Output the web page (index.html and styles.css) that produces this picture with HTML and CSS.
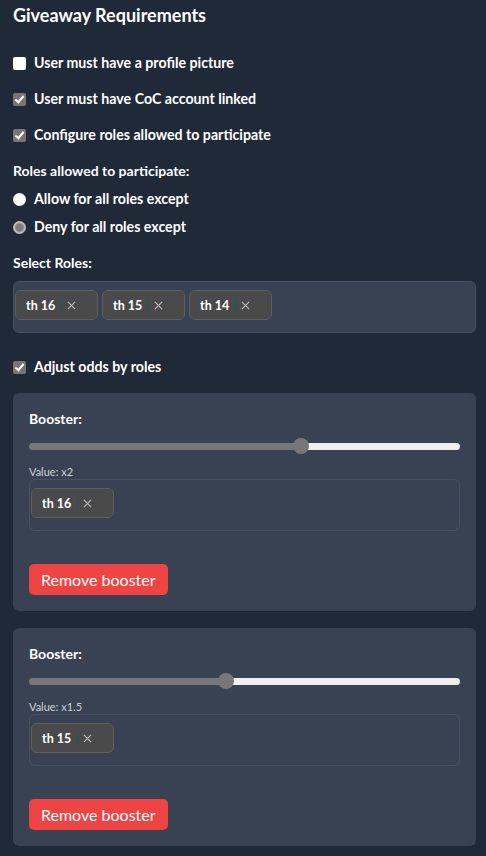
FILE: index.html
```html
<!DOCTYPE html>
<html>
<head>
<meta charset="utf-8">
<link rel="stylesheet" href="styles.css">
</head>
<body>
<div class="page">
  <h2 class="title">Giveaway Requirements</h2>
  <div class="checks">
    <label class="row"><input type="checkbox" class="cb"> <span>User must have a profile picture</span></label>
    <label class="row"><input type="checkbox" class="cb" checked> <span>User must have CoC account linked</span></label>
    <label class="row"><input type="checkbox" class="cb" checked> <span>Configure roles allowed to participate</span></label>
  </div>
  <div class="label roles-label">Roles allowed to participate:</div>
  <div class="radios">
    <label class="row"><input type="radio" name="mode" class="rb"> <span>Allow for all roles except</span></label>
    <label class="row"><input type="radio" name="mode" class="rb" checked> <span>Deny for all roles except</span></label>
  </div>
  <div class="label select-label">Select Roles:</div>
  <div class="select">
    <span class="chip"><span class="chip-text">th 16</span><span class="chip-sep"></span><svg class="chip-x" viewBox="0 0 10 10"><path d="M1 1L9 9M9 1L1 9"/></svg></span>
    <span class="chip"><span class="chip-text">th 15</span><span class="chip-sep"></span><svg class="chip-x" viewBox="0 0 10 10"><path d="M1 1L9 9M9 1L1 9"/></svg></span>
    <span class="chip"><span class="chip-text">th 14</span><span class="chip-sep"></span><svg class="chip-x" viewBox="0 0 10 10"><path d="M1 1L9 9M9 1L1 9"/></svg></span>
  </div>
  <label class="row adjust"><input type="checkbox" class="cb" checked> <span>Adjust odds by roles</span></label>

  <div class="card">
    <div class="label">Booster:</div>
    <input type="range" class="slider" min="0.25" max="3" step="0.25" value="2" style="--p:63.6%">
    <div class="value">Value: x2</div>
    <div class="select inner">
      <span class="chip"><span class="chip-text">th 16</span><span class="chip-sep"></span><svg class="chip-x" viewBox="0 0 10 10"><path d="M1 1L9 9M9 1L1 9"/></svg></span>
    </div>
    <button class="remove">Remove booster</button>
  </div>

  <div class="card">
    <div class="label">Booster:</div>
    <input type="range" class="slider" min="0.25" max="3" step="0.25" value="1.5" style="--p:45.5%">
    <div class="value">Value: x1.5</div>
    <div class="select inner">
      <span class="chip"><span class="chip-text">th 15</span><span class="chip-sep"></span><svg class="chip-x" viewBox="0 0 10 10"><path d="M1 1L9 9M9 1L1 9"/></svg></span>
    </div>
    <button class="remove">Remove booster</button>
  </div>
</div>
</body>
</html>
```
FILE: styles.css
```css
html, body {
  margin: 0;
  padding: 0;
  background: #1f2937;
}
body {
  font-family: "Lato", "Noto Sans", sans-serif;
  color: #ffffff;
  height: 856px;
  overflow: hidden;
}
.page {
  padding: 3px 10px 0 13px;
  display: flex;
  flex-direction: column;
}
.title {
  margin: 0;
  font-size: 18px;
  line-height: 24px;
  font-weight: 700;
}
.checks {
  margin-top: 26px;
  display: flex;
  flex-direction: column;
  gap: 16px;
}
.row {
  display: flex;
  align-items: center;
  gap: 8px;
  font-size: 14.2px;
  font-weight: 700;
  line-height: 20px;
  height: 20px;
}
.cb {
  appearance: none;
  -webkit-appearance: none;
  margin: 0;
  width: 13px;
  height: 13px;
  border-radius: 2px;
  background: #ffffff;
  position: relative;
  flex: none;
}
.cb:checked {
  background: #767676;
}
.cb:checked::after {
  content: "";
  position: absolute;
  left: 4px;
  top: 1.5px;
  width: 3px;
  height: 7px;
  border: solid #fff;
  border-width: 0 2px 2px 0;
  transform: rotate(40deg);
}
.label {
  font-size: 14px;
  font-weight: 700;
  line-height: 20px;
}
.roles-label {
  margin-top: 16px;
}
.radios {
  margin-top: 8px;
  display: flex;
  flex-direction: column;
  gap: 8px;
}
.rb {
  appearance: none;
  -webkit-appearance: none;
  margin: 0;
  width: 13px;
  height: 13px;
  border-radius: 50%;
  background: #ffffff;
  flex: none;
  box-sizing: border-box;
}
.rb:checked {
  background: #7b7b7b;
  border: 2px solid #b9b9b9;
  box-shadow: inset 0 0 0 1px #8e8e8e;
}
.select-label {
  margin-top: 16px;
}
.select {
  margin-top: 8px;
  box-sizing: border-box;
  width: 463px;
  height: 52px;
  border: 1px solid #475163;
  border-radius: 6px;
  background: #394252;
  padding: 8px 0 0 1px;
  display: flex;
  align-items: flex-start;
  gap: 4px;
}
.chip {
  box-sizing: border-box;
  width: 83px;
  height: 30px;
  border: 1px solid #5e5e5e;
  border-radius: 6px;
  background: #4a4a4a;
  display: flex;
  align-items: center;
  padding-left: 10px;
}
.chip-text {
  font-size: 12.5px;
  font-weight: 700;
  color: #ffffff;
  width: 35px;
}
.chip-sep {
  width: 1px;
  height: 13px;
  background: #1b5a5c;
}
.chip-x {
  margin-left: 5px;
  width: 9px;
  height: 9px;
  stroke: #b4b4b4;
  stroke-width: 1.4;
  fill: none;
}
.adjust {
  margin-top: 24px;
}
.card {
  margin-top: 16px;
  box-sizing: border-box;
  width: 463px;
  background: #394252;
  border-radius: 6px;
  padding: 16px;
  display: flex;
  flex-direction: column;
  align-items: flex-start;
}
.card + .card {
  margin-top: 17px;
}
.slider {
  -webkit-appearance: none;
  appearance: none;
  margin: 8px 0 0 0;
  width: 431px;
  height: 18px;
  background: transparent;
}
.slider::-webkit-slider-runnable-track {
  height: 7px;
  border-radius: 4px;
  background: linear-gradient(to right, #777777 0, #777777 var(--p), #efefef var(--p), #efefef 100%);
}
.slider::-webkit-slider-thumb {
  -webkit-appearance: none;
  width: 16px;
  height: 16px;
  border-radius: 50%;
  background: #777777;
  margin-top: -4.5px;
}
.value {
  margin-top: 10px;
  font-size: 11px;
  line-height: 14px;
  color: #c9d1dc;
}
.select.inner {
  margin-top: 0;
  width: 431px;
}
.remove {
  margin-top: 33px;
  border: none;
  border-radius: 5px;
  background: #ef4444;
  color: #ffffff;
  font-family: inherit;
  font-size: 16px;
  height: 31px;
  padding: 0 12px;
}
```
